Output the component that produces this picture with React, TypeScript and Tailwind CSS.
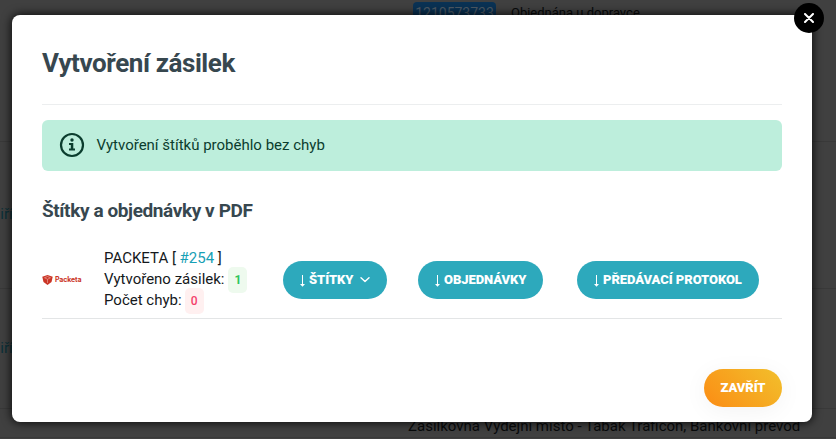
import type { ReactNode } from "react";

function OrdersTable() {
  return (
    <div className="flex h-[439px] flex-col overflow-hidden bg-[#404040] text-[14px] leading-[20px] text-[#080a0b]">
      <div className="h-[142px] shrink-0 border-b border-[#393939] pl-[413px]">
        <div className="flex items-start gap-[15px] pt-[2px]">
          <span className="flex h-[22px] w-[83px] items-center justify-center rounded-[4px] bg-[#0a3254] text-[14px] text-[#4d5a66]">
            1210573733
          </span>
          <span className="whitespace-nowrap text-[13px] leading-[22px]">Objednána u dopravce</span>
        </div>
      </div>
      <div className="h-[147px] shrink-0 border-b border-[#393939] pt-[62px] text-[15px] text-[#0b3038]">
        <div className="-ml-[8px]">Jiří</div>
      </div>
      <div className="h-[120px] shrink-0 border-b border-[#393939] pt-[49px] text-[15px] text-[#0b3038]">
        <div className="-ml-[8px]">Jiří</div>
      </div>
      <div className="h-[29px] shrink-0 border-b border-[#393939] pl-[408px] pt-[7px]">
        <span className="whitespace-nowrap text-[15px]">
          Zásilkovna Výdejní místo - Tabák Traficon, Bankovní převod
        </span>
      </div>
    </div>
  );
}

function PacketaLogo() {
  return (
    <div className="mt-[2px] flex w-[40px] items-center gap-[2px]">
      <svg width="11" height="10" viewBox="0 0 22 20" className="shrink-0">
        <path d="M11 0 L21.5 3.5 L19 14 L11 20 L3 14 L0.5 3.5 Z" fill="#cb3526" />
        <path d="M5 5.5 L11 3 L17 5.5 L11 8.5 Z M11 8.5 V16" fill="none" stroke="#eba79e" strokeWidth="1.3" />
      </svg>
      <span className="font-[Inter,sans-serif] text-[7px] font-bold leading-[10px] tracking-[-0.12px] text-[#cb3526]">
        Packeta
      </span>
    </div>
  );
}

function Arrow() {
  return (
    <svg width="6" height="12" viewBox="0 0 6 12" className="mr-[3px] mt-[2px] shrink-0" fill="none" stroke="#fff">
      <path d="M2.5 0V11" strokeWidth="1" />
      <path d="M0 9H5L2.5 11.8Z" fill="#fff" stroke="none" />
    </svg>
  );
}

function ActionButton({ children, className }: { children: ReactNode; className: string }) {
  return (
    <button
      className={`mt-[2px] flex h-[38px] shrink-0 items-center whitespace-nowrap rounded-full bg-[#2da9bc] pb-px pl-[17px] text-[13px] font-black tracking-[-0.06px] text-white ${className}`}
    >
      <Arrow />
      {children}
    </button>
  );
}

function ShipmentRow() {
  return (
    <div className="flex h-[79px] items-center border-b border-[#e3e5e6]">
      <PacketaLogo />
      <div className="ml-[22px] w-[179px] shrink-0 whitespace-nowrap text-[15px] leading-[21px] text-[#15191c]">
        <div>
          PACKETA [ <a className="text-[#18a0b5]">#254</a> ]
        </div>
        <div className="flex h-[21px] items-center">
          Vytvořeno zásilek:
          <span className="ml-[4px] mt-[2px] flex h-[26px] w-[19px] items-center justify-center rounded-[5px] bg-[#eefaee] text-[12px] font-bold text-[#2fc55b]">
            1
          </span>
        </div>
        <div className="flex h-[21px] items-center">
          Počet chyb:
          <span className="ml-[3px] mt-[2px] flex h-[26px] w-[19px] items-center justify-center rounded-[5px] bg-[#fff0f0] text-[12px] font-medium text-[#f43f6c]">
            0
          </span>
        </div>
      </div>
      <ActionButton className="w-[104px]">
        ŠTÍTKY
        <svg width="10" height="6" viewBox="0 0 10 6" className="ml-[7px] mt-px" fill="none" stroke="#fff" strokeWidth="1.4" strokeLinecap="round" strokeLinejoin="round">
          <path d="M1 .8 5 4.6 9 .8" />
        </svg>
      </ActionButton>
      <ActionButton className="ml-[31px] w-[125px]">OBJEDNÁVKY</ActionButton>
      <ActionButton className="ml-[34px] w-[182px]">PŘEDÁVACÍ PROTOKOL</ActionButton>
    </div>
  );
}

export default function App() {
  return (
    <div className="relative h-[439px] w-[836px] overflow-hidden font-[Roboto,sans-serif]">
      <OrdersTable />
      <div className="absolute left-[12px] top-[15px] flex h-[407px] w-[800px] flex-col rounded-[8px] bg-white px-[30px] shadow-[0_0_10px_1px_rgba(0,0,0,0.8)]">
        <h1 className="flex h-[90px] shrink-0 items-center border-b border-[#eceeef] pt-[7px] text-[26px] font-bold tracking-[-0.42px] text-[#37474f]">
          Vytvoření zásilek
        </h1>
        <div className="mt-[15px] flex h-[51px] shrink-0 items-center rounded-[6px] bg-[#bdeedc] pl-[17px] text-[15px] text-[#0b3d2e]">
          <svg width="26" height="26" viewBox="0 0 26 26" className="-mt-px mr-[11.5px]">
            <circle cx="13" cy="13" r="11" fill="none" stroke="currentColor" strokeWidth="2.2" />
            <circle cx="13" cy="8" r="1.7" fill="currentColor" />
            <path d="M10 11h4.3v5.6H16v2h-6v-2h1.8v-3.6H10z" fill="currentColor" />
          </svg>
          Vytvoření štítků proběhlo bez chyb
        </div>
        <h2 className="mt-[28px] shrink-0 text-[19px] font-bold leading-[24px] tracking-[-0.4px] text-[#37474f]">
          Štítky a objednávky v PDF
        </h2>
        <div className="mt-[17px] shrink-0">
          <ShipmentRow />
        </div>
        <div className="mt-[50px] flex justify-end">
          <button className="h-[38px] w-[78px] rounded-full bg-linear-[45deg,#fb8c14,#f2c02c] text-[13px] font-black tracking-[-0.06px] text-white shadow-[0_4px_24px_rgba(0,0,0,0.05)]">
            ZAVŘÍT
          </button>
        </div>
      </div>
      <button className="absolute left-[794px] top-[3px] flex size-[30px] items-center justify-center rounded-full bg-black">
        <svg width="10" height="10" viewBox="0 0 10 10" stroke="#fff" strokeWidth="2" strokeLinecap="round">
          <path d="M1 1 9 9M9 1 1 9" />
        </svg>
      </button>
    </div>
  );
}
